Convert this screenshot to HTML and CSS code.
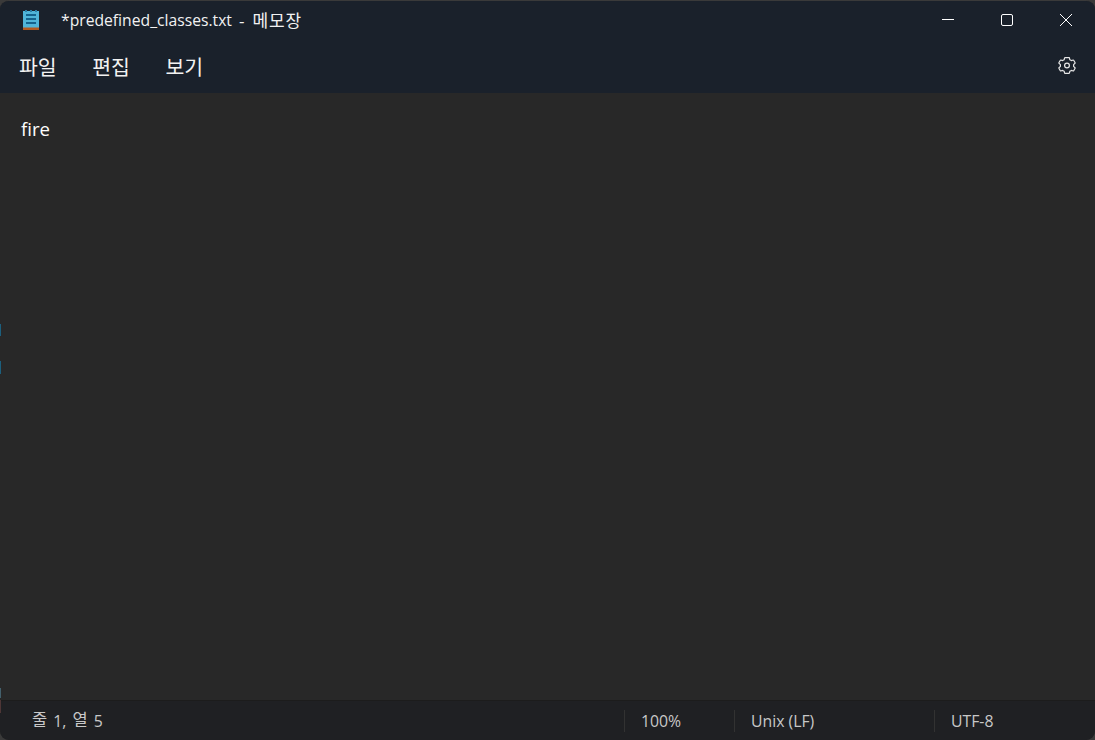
FILE: index.html
```html
<!DOCTYPE html>
<html lang="ko">
<head>
<meta charset="utf-8">
<title>*predefined_classes.txt - 메모장</title>
<link rel="stylesheet" href="styles.css">
</head>
<body>
<div class="window">
  <div class="top">
    <header class="titlebar">
      <svg class="app-icon" width="16" height="20" viewBox="0 0 16 20">
        <rect x="0" y="1" width="16" height="18" fill="#4fb4d8"/>
        <rect x="0" y="17.5" width="16" height="2.5" fill="#b3591f"/>
        <rect x="2" y="0" width="2" height="2" fill="#2a7ea6"/>
        <rect x="7" y="0" width="2" height="2" fill="#2a7ea6"/>
        <rect x="12" y="0" width="2" height="2" fill="#2a7ea6"/>
        <rect x="3" y="4" width="10" height="2" fill="#14628c"/>
        <rect x="3" y="8" width="10" height="2" fill="#14628c"/>
        <rect x="3" y="12" width="10" height="2" fill="#14628c"/>
      </svg>
      <span class="title">*predefined_classes.txt<span class="dash">-</span><span class="ko-title">메모장</span></span>
      <div class="controls">
        <svg class="ctl" width="14" height="14" viewBox="0 0 14 14"><path d="M1 6.5H13" stroke="#fff" fill="none"/></svg>
        <svg class="ctl" width="14" height="14" viewBox="0 0 14 14"><rect x="1.5" y="1.5" width="11" height="11" rx="1.5" stroke="#fff" fill="none"/></svg>
        <svg class="ctl" width="14" height="14" viewBox="0 0 14 14"><path d="M1 1L13 13M13 1L1 13" stroke="#fff" fill="none"/></svg>
      </div>
    </header>
    <nav class="menubar">
      <span class="menu-item">파일</span>
      <span class="menu-item">편집</span>
      <span class="menu-item">보기</span>
      <svg class="gear" width="20" height="20" viewBox="0 0 20 20" fill="none" stroke="#e6e6e6" stroke-width="1.2" stroke-linejoin="round">
        <path d="M8 1.6c-.2 0-.3.1-.4.3l-.4 1.8-1.6.9-1.8-.6c-.2 0-.4 0-.5.2L1.9 6.8c-.1.2 0 .4.1.5l1.4 1.3v1.8L2 11.7c-.1.1-.2.3-.1.5l1.4 2.6c.1.2.3.2.5.2l1.8-.6 1.6.9.4 1.8c0 .2.2.3.4.3h4c.2 0 .3-.1.4-.3l.4-1.8 1.6-.9 1.8.6c.2 0 .4 0 .5-.2l1.4-2.6c.1-.2 0-.4-.1-.5l-1.4-1.3V8.6L18 7.3c.1-.1.2-.3.1-.5l-1.4-2.6c-.1-.2-.3-.2-.5-.2l-1.8.6-1.6-.9-.4-1.8c0-.2-.2-.3-.4-.3z"/>
        <circle cx="10" cy="9.5" r="2.4"/>
      </svg>
    </nav>
  </div>
  <main class="editor">fire</main>
  <footer class="statusbar">
    <span class="st st-pos"><span class="ko-st">줄</span> 1, <span class="ko-st">열</span> 5</span>
    <span class="st st-zoom">100%</span>
    <span class="st st-eol">Unix (LF)</span>
    <span class="st st-enc">UTF-8</span>
  </footer>
  <i class="edge edge-a"></i>
  <i class="edge edge-b"></i>
  <i class="edge edge-c"></i>
  <i class="edge edge-d"></i>
</div>
</body>
</html>
```
FILE: styles.css
```css
* { box-sizing: border-box; }
html, body { margin: 0; height: 100%; background: #3a3a3a; }
body { width: 1095px; height: 740px; overflow: hidden; font-family: "Open Sans", "Noto Sans CJK KR", sans-serif; color: #fff; }
.window { position: relative; width: 1095px; height: 740px; display: flex; flex-direction: column; border-radius: 9px; overflow: hidden; background: #282828; border-top: 1px solid #3a3a3a; }
.top { background: #1a212b; height: 92px; display: flex; flex-direction: column; }
.titlebar { height: 41px; display: flex; align-items: center; padding-left: 23px; }
.app-icon { flex: none; margin-top: -3px; }
.title { margin-left: 22px; font-size: 15.7px; color: #f2f2f2; white-space: nowrap; margin-top: -3px; display: flex; align-items: center; }
.dash { margin: 0 8px 0 7px; font-size: 17px; }
.ko-title { font-size: 17px; line-height: 1; letter-spacing: .9px; }
.controls { margin-left: auto; display: flex; align-items: center; gap: 45px; padding-right: 22px; margin-top: -4px; }
.ctl { flex: none; }
.menubar { flex: 1; display: flex; align-items: center; padding-left: 19px; padding-right: 18px; gap: 35.5px; font-size: 20.5px; padding-bottom: 3px; }
.menu-item { color: #f2f2f2; }
.gear { margin-left: auto; flex: none; }
.editor { flex: 1; padding: 23px 21px; font-size: 18.6px; line-height: 26px; background: #282828; }
.statusbar { height: 40px; background: #1f2023; border-top: 1px solid #1c1c1c; display: flex; align-items: center; font-size: 15.8px; color: #c8c8c8; }
.st { height: 22px; display: flex; align-items: center; padding-left: 16px; white-space: pre; border-left: 1px solid #323232; }
.st-pos { width: 624px; padding-left: 32px; border-left: none; word-spacing: 2px; }
.ko-st { font-size: 16.5px; line-height: 1; }
.st-zoom { width: 110px; }
.st-eol { width: 200px; }
.st-enc { flex: 1; }
.edge { position: absolute; left: 0; width: 1px; }
.edge-a { top: 323px; height: 12px; background: #1c5f7d; }
.edge-b { top: 360px; height: 13px; background: #1c5f7d; }
.edge-c { top: 687px; height: 10px; background: #43606c; }
.edge-d { top: 699px; height: 13px; background: #4e3636; }
```
